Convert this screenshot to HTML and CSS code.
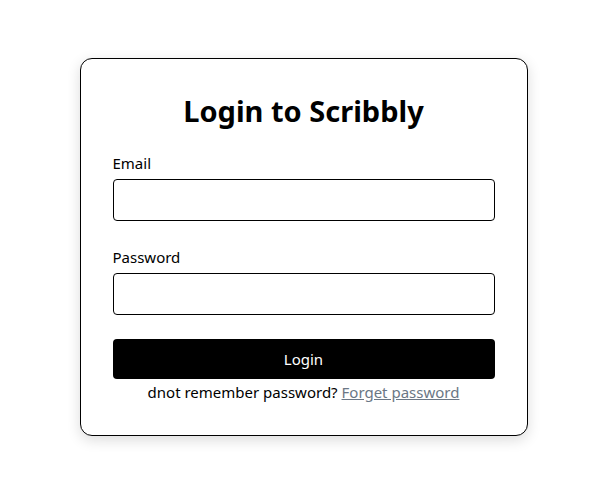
FILE: index.html
```html
<!DOCTYPE html>
<html>
<head>
<meta charset="utf-8">
<link rel="stylesheet" href="styles.css">
</head>
<body>
<div class="card">
  <h1 class="title">Login to Scribbly</h1>
  <form class="form">
    <label class="field">
      <span class="label">Email</span>
      <input class="input" type="email">
    </label>
    <label class="field">
      <span class="label">Password</span>
      <input class="input" type="password">
    </label>
    <button class="btn" type="button">Login</button>
    <p class="note">dnot remember password? <a class="link" href="#">Forget password</a></p>
  </form>
</div>
</body>
</html>
```
FILE: styles.css
```css
html, body {
  margin: 0;
  padding: 0;
}
body {
  box-sizing: border-box;
  min-height: 100vh;
  padding: 4px 0 0 2px;
  display: flex;
  align-items: center;
  justify-content: center;
  font-family: "Noto Sans", "Open Sans", sans-serif;
  background: #fff;
  color: #000;
}
.card {
  width: 382px;
  padding: 32px;
  border: 1px solid #000;
  border-radius: 12px;
  box-shadow: 0 4px 14px rgba(0,0,0,0.14);
  background: #fff;
}
.title {
  margin: 0 0 21px;
  font-size: 29px;
  line-height: 40px;
  font-weight: 700;
  text-align: center;
}
.form {
  display: flex;
  flex-direction: column;
}
.field {
  display: flex;
  flex-direction: column;
  gap: 5px;
  margin-bottom: 25px;
}
.label {
  font-size: 15px;
  line-height: 22px;
}
.input {
  box-sizing: border-box;
  height: 42px;
  border: 1px solid #000;
  border-radius: 4px;
  font: inherit;
  padding: 0 10px;
}
.field + .field {
  margin-bottom: 24px;
}
.btn {
  height: 40px;
  border: none;
  border-radius: 4px;
  background: #000;
  color: #fff;
  font: inherit;
  font-size: 15px;
}
.note {
  margin: 2px 0 0;
  font-size: 15px;
  line-height: 22px;
  text-align: center;
}
.link {
  color: #6b7785;
  text-decoration: underline;
}
```
